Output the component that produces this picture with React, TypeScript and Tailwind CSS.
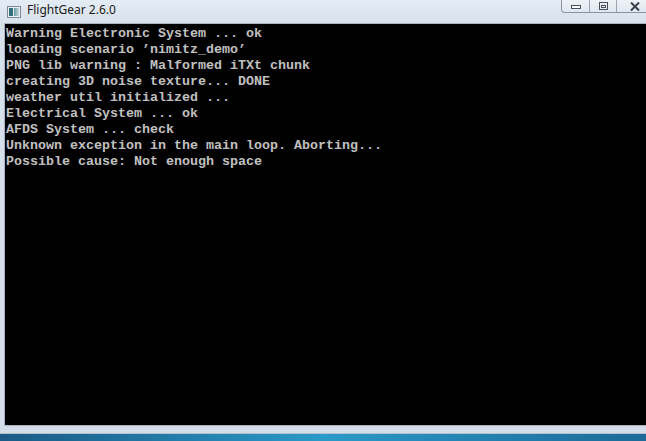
import React from "react";

const lines = [
  "Warning Electronic System ... ok",
  "loading scenario \u2019nimitz_demo\u2019",
  "PNG lib warning : Malformed iTXt chunk",
  "creating 3D noise texture... DONE",
  "weather util initialized ...",
  "Electrical System ... ok",
  "AFDS System ... check",
  "Unknown exception in the main loop. Aborting...",
  "Possible cause: Not enough space",
];

export default function App() {
  return (
    <div className="w-[646px] h-[441px] overflow-hidden flex flex-col bg-[#d6e0ea]">
      {/* title bar */}
      <div className="h-[23px] flex items-start bg-gradient-to-b from-[#e4ecf4] to-[#d8e2ec] relative">
        <div className="mt-[6px] ml-[7px] w-[14px] h-[12px] border border-[#7a8a99] bg-[#e8eef2] flex items-center px-[1px] gap-[1px]">
          <div className="w-[4px] h-[8px] bg-[#2f6f7a]" />
          <div className="w-[6px] h-[8px] bg-gradient-to-r from-[#5f9aa0] to-[#c8d8dc]" />
        </div>
        <div
          className="ml-[6px] mt-[2px] text-[12px] text-[#1a1a1a] leading-[16px]"
          style={{ fontFamily: '"Noto Sans", "Open Sans", sans-serif' }}
        >
          FlightGear 2.6.0
        </div>
        <div className="absolute right-0 top-0 flex h-[13px] border-l border-b border-[#8a949e] rounded-bl-[4px] overflow-hidden bg-gradient-to-b from-[#eef3f7] to-[#dfe7ef]">
          <div className="w-[28px] flex items-center justify-center border-r border-[#9aa4ae]">
            <div className="w-[10px] h-[4px] border border-[#4a5058] bg-white mt-[2px]" />
          </div>
          <div className="w-[27px] flex items-center justify-center border-r border-[#9aa4ae]">
            <div className="w-[9px] h-[8px] border border-[#4a5058] flex items-center justify-center">
              <div className="w-[5px] h-[3px] border border-[#4a5058]" />
            </div>
          </div>
          <div className="w-[29px] flex items-center justify-start pl-[13px]">
            <svg width="16" height="9" viewBox="0 0 16 9">
              <path d="M1 0.5 L9 8.5 M9 0.5 L1 8.5" stroke="#3a4048" strokeWidth="2" fill="none" />
            </svg>
          </div>
        </div>
      </div>
      {/* console */}
      <div className="flex-1 flex pl-[4px]">
        <div className="flex-1 border-l border-t border-b border-[#a9b3bd]">
          <div
            className="h-full bg-black text-[#c0c0c0] pt-[2px] pl-[1px] font-bold text-[13.33px] leading-[16px] whitespace-pre"
            style={{ fontFamily: '"Liberation Mono", "DejaVu Sans Mono", monospace' }}
          >
            {lines.map((l, i) => (
              <div key={i}>{l}</div>
            ))}
          </div>
        </div>
      </div>
      <div className="h-[8px] bg-[#d4dee8] border-b border-[#b4c0cc]" />
      {/* desktop */}
      <div className="h-[7px] bg-gradient-to-r from-[#1b5a86] via-[#2a9ac8] to-[#1d6a98]" />
    </div>
  );
}
